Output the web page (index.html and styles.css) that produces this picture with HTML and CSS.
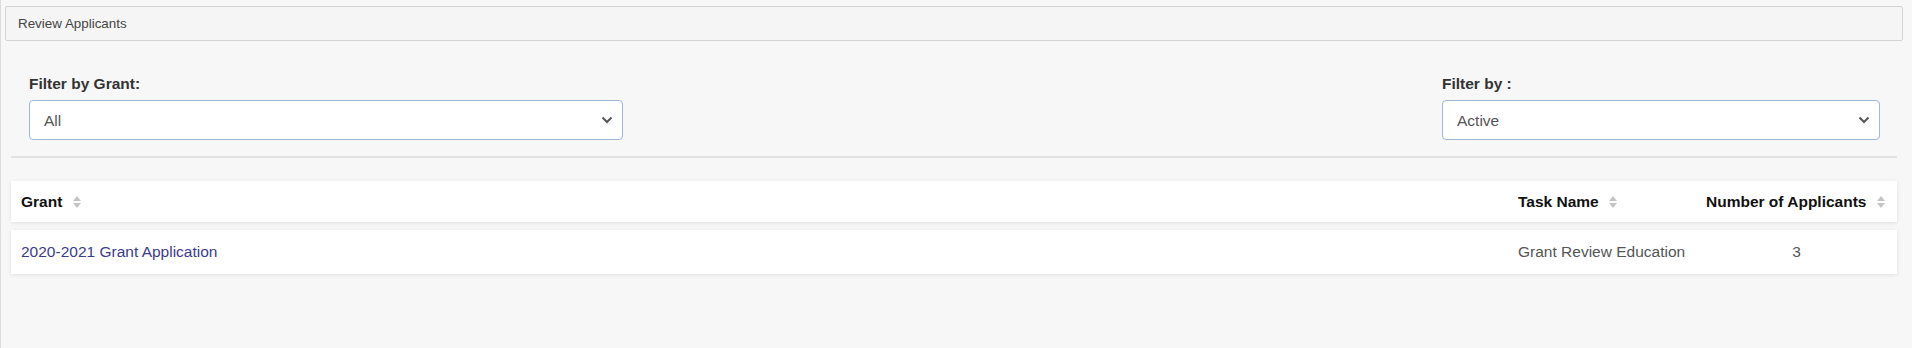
FILE: index.html
```html
<!DOCTYPE html>
<html lang="en">
<head>
    <meta charset="UTF-8">
    <meta name="viewport" content="width=device-width, initial-scale=1.0">
    <title>Review Applicants</title>
    <link rel="stylesheet" href="styles.css">
</head>
<body>
    <div class="page">
        <div class="page-title">Review Applicants</div>

        <div class="filters">
            <div class="filter filter-grant">
                <label for="grantFilter">Filter by Grant:</label>
                <div class="select-box">
                    <select id="grantFilter">
                        <option>All</option>
                    </select>
                    <svg class="chevron" width="12" height="8" viewBox="0 0 12 8"><path d="M1.5 1.5 L6 6 L10.5 1.5" fill="none" stroke="#555" stroke-width="2"/></svg>
                </div>
            </div>
            <div class="filter filter-status">
                <label for="statusFilter">Filter by :</label>
                <div class="select-box">
                    <select id="statusFilter">
                        <option>Active</option>
                    </select>
                    <svg class="chevron" width="12" height="8" viewBox="0 0 12 8"><path d="M1.5 1.5 L6 6 L10.5 1.5" fill="none" stroke="#555" stroke-width="2"/></svg>
                </div>
            </div>
        </div>

        <div class="divider"></div>

        <div class="table">
            <div class="table-row table-head">
                <div class="cell">Grant <span class="sort"></span></div>
                <div class="cell">Task Name <span class="sort"></span></div>
                <div class="cell">Number of Applicants <span class="sort"></span></div>
            </div>
            <div class="table-row">
                <div class="cell"><a href="#" class="grant-link">2020-2021 Grant Application</a></div>
                <div class="cell muted">Grant Review Education</div>
                <div class="cell muted center">3</div>
            </div>
        </div>
    </div>
</body>
</html>
```

FILE: styles.css
```css
html, body {
    margin: 0;
    padding: 0;
    height: 100%;
}
body {
    background-color: #f7f7f7;
    font-family: "Liberation Sans", Arial, sans-serif;
    color: #333;
}
.page {
    min-height: 100%;
    border-left: 1px solid #dcdcdc;
    box-sizing: border-box;
    padding: 6px 9px 0 4px;
}
.page-title {
    height: 33px;
    line-height: 33px;
    border: 1px solid #d4d4d4;
    border-radius: 2px;
    background-color: #f5f5f5;
    padding-left: 12px;
    font-size: 13.4px;
    color: #444;
}
.filters {
    display: flex;
    justify-content: space-between;
    padding: 34px 23px 0 24px;
}
.filter label {
    display: block;
    font-size: 15.5px;
    font-weight: bold;
    color: #333;
    line-height: 18px;
    margin-bottom: 7px;
}
.filter-grant {
    width: 594px;
}
.filter-status {
    width: 438px;
}
.select-box {
    position: relative;
}
.select-box select {
    appearance: none;
    -webkit-appearance: none;
    width: 100%;
    height: 40px;
    border: 1px solid #9fb8d8;
    border-radius: 4px;
    background-color: #fff;
    padding: 0 14px;
    font-family: "Liberation Sans", Arial, sans-serif;
    font-size: 15.5px;
    color: #555;
    outline: none;
}
.chevron {
    position: absolute;
    right: 10px;
    top: 16px;
    pointer-events: none;
}
.divider {
    margin: 16px 6px 0 6px;
    border-top: 2px solid #e2e2e2;
}
.table {
    margin: 23px 6px 0 6px;
}
.table-row {
    display: grid;
    grid-template-columns: 1fr 188px 201px;
    align-items: center;
    background-color: #fff;
    box-shadow: 0 1px 4px rgba(0, 0, 0, 0.1);
    height: 44px;
    font-size: 15.5px;
}
.table-head {
    height: 41px;
    margin-bottom: 8px;
    font-weight: bold;
    color: #111;
}
.cell {
    padding-left: 10px;
    white-space: nowrap;
}
.cell.center {
    text-align: center;
    padding-right: 10px;
}
.muted {
    color: #555;
}
.grant-link {
    color: #3b3b8f;
    text-decoration: none;
}
.sort {
    display: inline-block;
    vertical-align: middle;
    margin-left: 6px;
    width: 0;
    height: 12px;
    position: relative;
    border-left: 4px solid transparent;
    border-right: 4px solid transparent;
}
.sort::before,
.sort::after {
    content: "";
    position: absolute;
    left: -4px;
    border-left: 4px solid transparent;
    border-right: 4px solid transparent;
}
.sort::before {
    top: 0;
    border-bottom: 5px solid #c4c4c4;
}
.sort::after {
    bottom: 0;
    border-top: 5px solid #c4c4c4;
}
```
